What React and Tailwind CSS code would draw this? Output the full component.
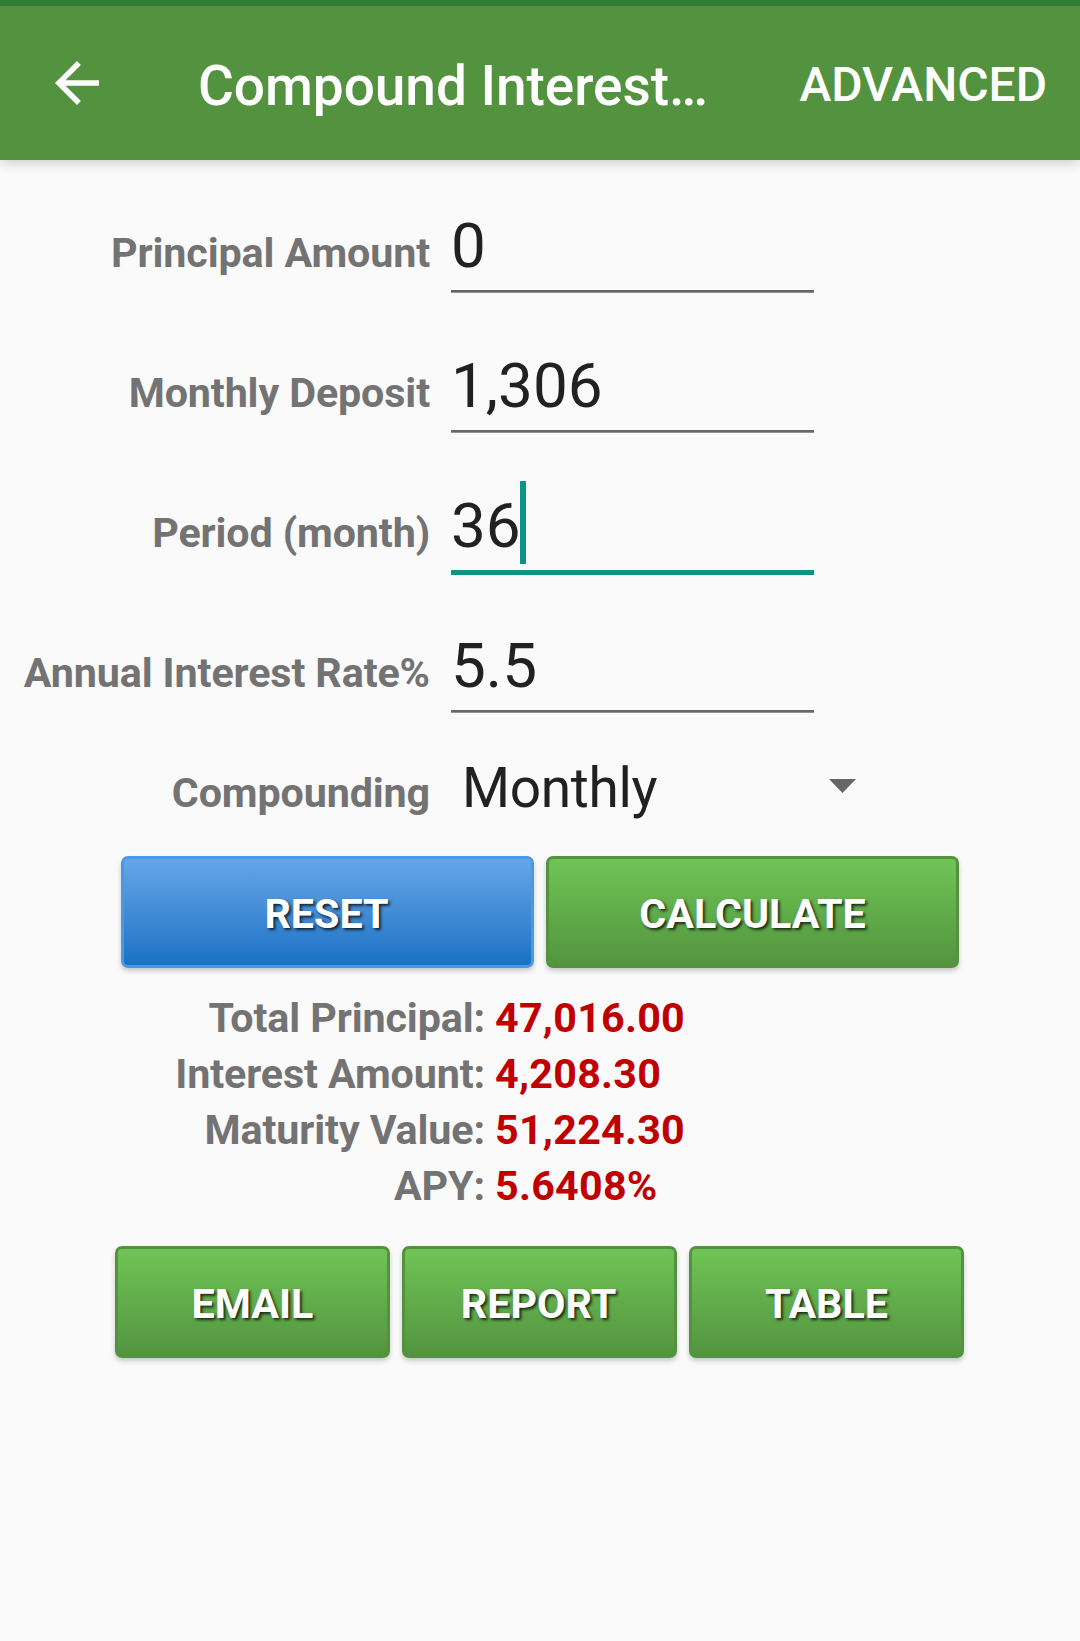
import React, { useState } from 'react';

const FIELDS = [
  { key: 'principal', label: 'Principal Amount', value: '0' },
  { key: 'deposit', label: 'Monthly Deposit', value: '1,306' },
  { key: 'period', label: 'Period (month)', value: '36' },
  { key: 'rate', label: 'Annual Interest Rate%', value: '5.5' },
];

const RESULTS = [
  { label: 'Total Principal:', value: '47,016.00' },
  { label: 'Interest Amount:', value: '4,208.30' },
  { label: 'Maturity Value:', value: '51,224.30' },
  { label: 'APY:', value: '5.6408%' },
];

function Header() {
  return (
    <header className="h-[160px] shrink-0 border-t-[6px] border-[#2e7d32] bg-[#53933f] text-white flex items-center shadow-[0_3px_12px_rgba(0,0,0,0.18)]">
      <button className="ml-[44px] shrink-0" aria-label="Back">
        <svg width="66" height="66" viewBox="0 0 24 24" fill="currentColor">
          <path d="M20 11H7.83l5.59-5.59L12 4l-8 8 8 8 1.41-1.41L7.83 13H20v-2z" />
        </svg>
      </button>
      <h1 className="ml-[88px] pt-[6px] text-[55px] leading-[64px] font-medium tracking-[-0.06px] whitespace-nowrap">Compound Interest…</h1>
      <button className="ml-auto mr-[33px] pt-[4px] text-[48px] leading-[56px] font-medium">ADVANCED</button>
    </header>
  );
}

function FieldRow({ label, value, focused, onFocus }) {
  return (
    <div className="h-[140px] flex items-baseline" onClick={onFocus}>
      <label className="w-[430px] shrink-0 text-right text-[41.25px] leading-[56px] font-bold tracking-[-0.12px] text-[#737373]">{label}</label>
      <div className="ml-[21px] w-[363px]">
        <div className="h-[86px] text-[62px] leading-[84px] text-[#212121]">
          <span className="relative">
            {value}
            {focused && <span className="absolute left-full ml-[-1px] top-[-8px] w-[6px] h-[83px] bg-[#0b9486]" />}
          </span>
        </div>
        {focused ? (
          <div className="h-[5px] bg-[#0b9486]" />
        ) : (
          <div className="h-[3px] bg-[#666666] border-b border-[#909090]" />
        )}
      </div>
    </div>
  );
}

function ActionButton({ children, color = 'green', className }) {
  const colors =
    color === 'blue'
      ? 'border-[#4a99e6] from-[#67a7e8] to-[#1371c3]'
      : 'border-[#53933f] from-[#70c656] to-[#53933f]';

  return (
    <button
      className={`h-[112px] pt-[4px] border-[3px] rounded-[7px] bg-linear-to-b bg-origin-border ${colors} text-white text-[41.25px] leading-[48px] font-bold shadow-[0_3px_5px_rgba(0,0,0,0.2)] [text-shadow:2px_2px_3px_rgba(0,0,0,0.75)] ${className}`}
    >
      {children}
    </button>
  );
}

export default function App() {
  const [active, setActive] = useState('period');

  return (
    <div className="h-[1641px] w-[1080px] flex flex-col bg-[#fafafa] overflow-hidden [font-family:Roboto,sans-serif]">
      <Header />

      <main className="pt-[44px]">
        {FIELDS.map(field => (
          <FieldRow
            key={field.key}
            label={field.label}
            value={field.value}
            focused={active === field.key}
            onFocus={() => setActive(field.key)}
          />
        ))}

        <div className="h-[92px] flex items-baseline">
          <span className="w-[430px] shrink-0 text-right text-[41.25px] leading-[48px] font-bold tracking-[-0.12px] text-[#737373]">Compounding</span>
          <button className="ml-[32px] w-[394px] flex items-center justify-between text-[55px] leading-[48px] tracking-[-0.3px] text-[#212121]">
            Monthly
            <svg className="mt-[-4px]" width="27" height="14" viewBox="0 0 27 14" fill="#666666">
              <path d="M0 0h27L13.500 14z" />
            </svg>
          </button>
        </div>

        <div className="flex gap-3 pl-[121px]">
          <ActionButton color="blue" className="w-[413px] pr-[2px]">RESET</ActionButton>
          <ActionButton className="w-[413px]">CALCULATE</ActionButton>
        </div>

        <div className="mt-[22px] text-[41.25px] leading-[56px]">
          {RESULTS.map(row => (
            <div key={row.label} className="flex">
              <span className="w-[485px] text-right font-bold tracking-[-0.12px] text-[#737373]">{row.label}</span>
              <span className="ml-[10px] font-bold tracking-[0.25px] text-[#c00000]">{row.value}</span>
            </div>
          ))}
        </div>

        <div className="mt-8 flex gap-3 pl-[115px]">
          <ActionButton className="w-[275px]">EMAIL</ActionButton>
          <ActionButton className="w-[275px] pr-[2px]">REPORT</ActionButton>
          <ActionButton className="w-[275px]">TABLE</ActionButton>
        </div>
      </main>
    </div>
  );
}
